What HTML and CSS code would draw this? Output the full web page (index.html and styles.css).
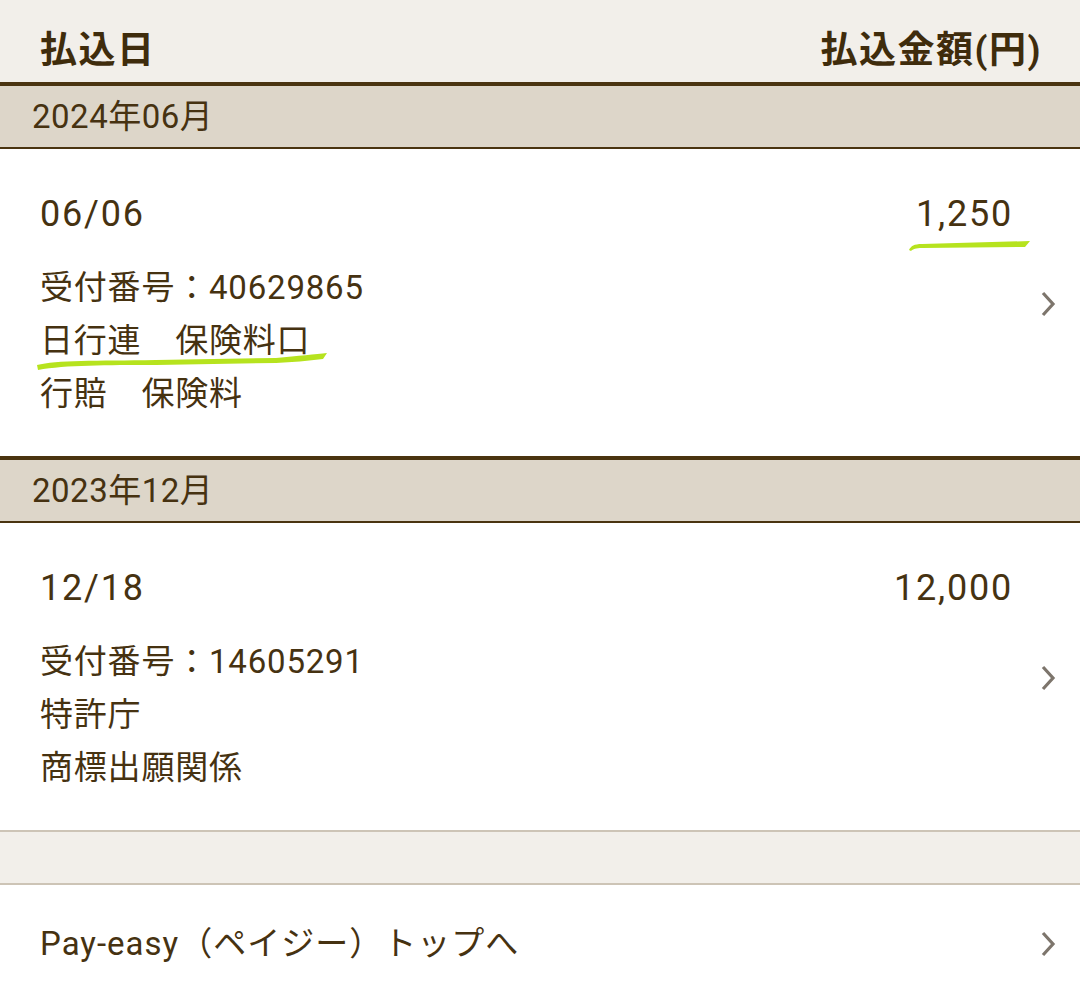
FILE: index.html
```html
<!DOCTYPE html>
<html lang="ja">
<head>
<meta charset="utf-8"/>
<meta content="width=device-width, initial-scale=1.0" name="viewport"/>
<title>払込履歴</title>
<link rel="stylesheet" href="styles.css">
</head>
<body>
  <div class="list-head">
    <span>払込日</span>
    <span>払込金額(円)</span>
  </div>

  <div class="month">2024年06月</div>
  <a class="item" href="#">
    <div class="item-body">
      <div class="item-top">
        <span>06/06</span>
        <span>1,250</span>
      </div>
      <p>受付番号：40629865</p>
      <p>日行連　保険料口</p>
      <p>行賠　保険料</p>
    </div>
    <span class="chev"><svg width="16" height="26" viewBox="0 0 16 26"><path d="M3 2 L13 13 L3 24" fill="none" stroke="#7d756c" stroke-width="3.2"/></svg></span>
    <svg class="mark mark-amount" width="124" height="12" viewBox="0 0 124 12"><path d="M1 10 C 3 6, 6 4, 14 4 L 122 1 L 117 7 L 14 8 C 8 8, 5 9, 3 11 Z" fill="#b6e31e"/></svg>
    <svg class="mark mark-name" width="292" height="20" viewBox="0 0 292 20"><path d="M1 14 C 20 9, 60 10, 120 9 L 240 7 C 262 5, 280 3, 291 2 L 287 8 C 272 10, 256 11, 240 12 L 120 14 C 70 14, 30 14, 2 19 Z" fill="#b6e31e"/></svg>
  </a>

  <div class="month">2023年12月</div>
  <a class="item" href="#">
    <div class="item-body">
      <div class="item-top">
        <span>12/18</span>
        <span>12,000</span>
      </div>
      <p>受付番号：14605291</p>
      <p>特許庁</p>
      <p>商標出願関係</p>
    </div>
    <span class="chev"><svg width="16" height="26" viewBox="0 0 16 26"><path d="M3 2 L13 13 L3 24" fill="none" stroke="#7d756c" stroke-width="3.2"/></svg></span>
  </a>

  <div class="spacer"></div>

  <a class="item foot" href="#">
    <div class="item-body">Pay-easy（ペイジー）トップへ</div>
    <span class="chev"><svg width="16" height="26" viewBox="0 0 16 26"><path d="M3 2 L13 13 L3 24" fill="none" stroke="#7d756c" stroke-width="3.2"/></svg></span>
  </a>
</body>
</html>
```

FILE: styles.css
```css
html, body {
  margin: 0;
  background: #ffffff;
  color: #463211;
  font-family: Roboto, "Noto Sans CJK JP", sans-serif;
  letter-spacing: 0.5px;
}
a {
  color: inherit;
  text-decoration: none;
}
.list-head {
  display: flex;
  justify-content: space-between;
  align-items: center;
  height: 82px;
  padding: 12px 38px 0 40px;
  background: #f2efea;
  font-size: 37px;
  font-weight: bold;
  letter-spacing: 1.5px;
  color: #3f2c0c;
  box-sizing: border-box;
}
.month {
  height: 61px;
  border-top: 4px solid #4a3410;
  border-bottom: 2px solid #4a3410;
  background: #ddd6c9;
  padding-left: 32px;
  font-size: 33px;
  line-height: 61px;
}
.item {
  position: relative;
  display: flex;
  align-items: center;
  padding: 38px 24px 36px 40px;
}
.item-body {
  flex: 1;
  padding-right: 27px;
}
.item-top {
  display: flex;
  justify-content: space-between;
  font-size: 36px;
  letter-spacing: 1.8px;
  line-height: 54px;
  margin-bottom: 20px;
}
.item p {
  margin: 0;
  font-size: 33px;
  letter-spacing: 0.8px;
  line-height: 53px;
}
.chev {
  display: flex;
  width: 16px;
}
.spacer {
  height: 51px;
  background: #f2efea;
  border-top: 2px solid #cdc4b6;
  border-bottom: 2px solid #cdc4b6;
}
.foot {
  padding-top: 34px;
  padding-bottom: 48px;
  font-size: 33px;
  letter-spacing: 1px;
  line-height: 50px;
}
.mark {
  position: absolute;
}
.mark-amount {
  left: 908px;
  top: 91px;
}
.mark-name {
  left: 36px;
  top: 202px;
}
```
